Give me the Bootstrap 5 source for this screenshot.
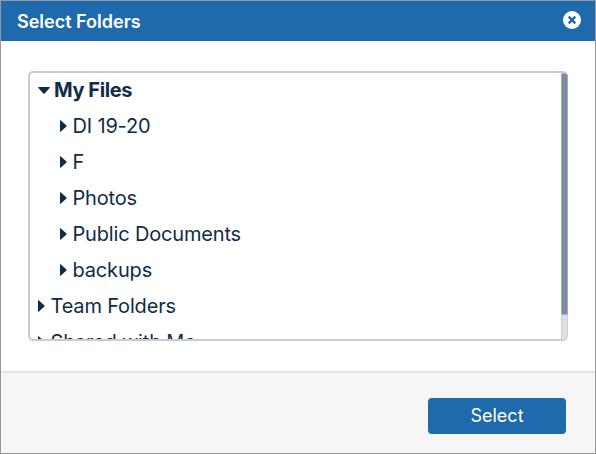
<!DOCTYPE html>
<html lang="en">
<head>
<meta charset="utf-8">
<meta name="viewport" content="width=device-width, initial-scale=1">
<title>Select Folders</title>
<link href="https://cdn.jsdelivr.net/npm/bootstrap@5.3.0/dist/css/bootstrap.min.css" rel="stylesheet">
<style>
body{font-family:Inter,"Liberation Sans",sans-serif;color:#102d45}
.dialog{height:454px;border:1px solid #999}
.dialog-head{height:40px;background:#1f69ad;padding:0 14px 0 16px}
.dialog-title{font-size:18px;font-weight:600;line-height:40px;padding-top:2px}
.dialog-close{width:18px;height:18px;margin-top:-2px}
.dialog-main{padding:30px 27px 0}
.tree-box{height:270px;width:540px;border:2px solid #ccc;border-right:0;border-radius:5px}
.tree-list{font-size:20px;line-height:36px;letter-spacing:-.17px}
.tree-item{height:36px;padding-left:7px}
.tree-item.child{padding-left:29px}
.tree-item span{margin-top:-2px}
.tree-item svg{margin-right:5.5px;margin-top:-2px}
.tree-item.open{font-weight:700;padding-left:8px;letter-spacing:-.42px}
.tree-item.open svg{margin-right:4.5px;margin-top:-2px;margin-left:-.5px}
.scroll-track{width:7px;background:#dce0e4;border-radius:0 3px 3px 0;border:solid #cbd0d5;border-width:0 1px}
.scroll-thumb{height:242px;margin:0 -1px;border-radius:2px;background:#7d8ba2;border:1px solid #a2acbb}
.dialog-foot{height:82px;background:#f6f6f6;border-top:2px solid #e4e4e4;padding:0 29px 0 0}
.btn-select{--bs-btn-color:#fff;--bs-btn-bg:#1f69ad;--bs-btn-hover-color:#fff;--bs-btn-hover-bg:#185990;width:138px;height:36px;font-size:18px;line-height:36px;border-radius:4px;margin-top:6px}
</style>
<script src="https://cdn.jsdelivr.net/npm/bootstrap@5.3.0/dist/js/bootstrap.bundle.min.js"></script>
</head>
<body class="overflow-hidden">
<div class="dialog d-flex flex-column bg-white">
  <header class="dialog-head d-flex align-items-center justify-content-between text-white">
    <h1 class="dialog-title m-0">Select Folders</h1>
    <button class="dialog-close btn p-0 border-0 d-flex" type="button" aria-label="Close">
      <svg width="18" height="18" viewBox="0 0 18 18"><circle cx="9" cy="9" r="9" fill="#fff"/><path d="M5.7 5.7l6.6 6.6M12.3 5.7l-6.6 6.6" stroke="#1f69ad" stroke-width="2.4"/></svg>
    </button>
  </header>
  <main class="dialog-main flex-grow-1">
    <div class="tree-box d-flex overflow-hidden">
      <ul class="tree-list list-unstyled m-0 flex-grow-1 overflow-hidden">
        <li class="tree-item open d-flex align-items-center"><svg width="12" height="7" viewBox="0 0 12 7"><path d="M.7 0h10.6q1 0 .3.9L6.7 6.4q-.7.7-1.4 0L.4.9Q-.3 0 .7 0z" fill="#102d45"/></svg><span>My Files</span></li>
        <li class="tree-item child d-flex align-items-center"><svg width="8" height="12" viewBox="0 0 8 12"><path d="M1 .7v10.6q0 1 .9.3L7.2 6.7q.7-.7 0-1.4L1.9.4Q1-.3 1 .7z" fill="#102d45"/></svg><span>DI 19-20</span></li>
        <li class="tree-item child d-flex align-items-center"><svg width="8" height="12" viewBox="0 0 8 12"><path d="M1 .7v10.6q0 1 .9.3L7.2 6.7q.7-.7 0-1.4L1.9.4Q1-.3 1 .7z" fill="#102d45"/></svg><span>F</span></li>
        <li class="tree-item child d-flex align-items-center"><svg width="8" height="12" viewBox="0 0 8 12"><path d="M1 .7v10.6q0 1 .9.3L7.2 6.7q.7-.7 0-1.4L1.9.4Q1-.3 1 .7z" fill="#102d45"/></svg><span>Photos</span></li>
        <li class="tree-item child d-flex align-items-center"><svg width="8" height="12" viewBox="0 0 8 12"><path d="M1 .7v10.6q0 1 .9.3L7.2 6.7q.7-.7 0-1.4L1.9.4Q1-.3 1 .7z" fill="#102d45"/></svg><span>Public Documents</span></li>
        <li class="tree-item child d-flex align-items-center"><svg width="8" height="12" viewBox="0 0 8 12"><path d="M1 .7v10.6q0 1 .9.3L7.2 6.7q.7-.7 0-1.4L1.9.4Q1-.3 1 .7z" fill="#102d45"/></svg><span>backups</span></li>
        <li class="tree-item d-flex align-items-center"><svg width="8" height="12" viewBox="0 0 8 12"><path d="M1 .7v10.6q0 1 .9.3L7.2 6.7q.7-.7 0-1.4L1.9.4Q1-.3 1 .7z" fill="#102d45"/></svg><span>Team Folders</span></li>
        <li class="tree-item d-flex align-items-center"><svg width="8" height="12" viewBox="0 0 8 12"><path d="M1 .7v10.6q0 1 .9.3L7.2 6.7q.7-.7 0-1.4L1.9.4Q1-.3 1 .7z" fill="#102d45"/></svg><span>Shared with Me</span></li>
      </ul>
      <div class="scroll-track flex-shrink-0"><div class="scroll-thumb"></div></div>
    </div>
  </main>
  <footer class="dialog-foot d-flex align-items-center justify-content-end">
    <button class="btn btn-select border-0 p-0" type="button">Select</button>
  </footer>
</div>
</body>
</html>
